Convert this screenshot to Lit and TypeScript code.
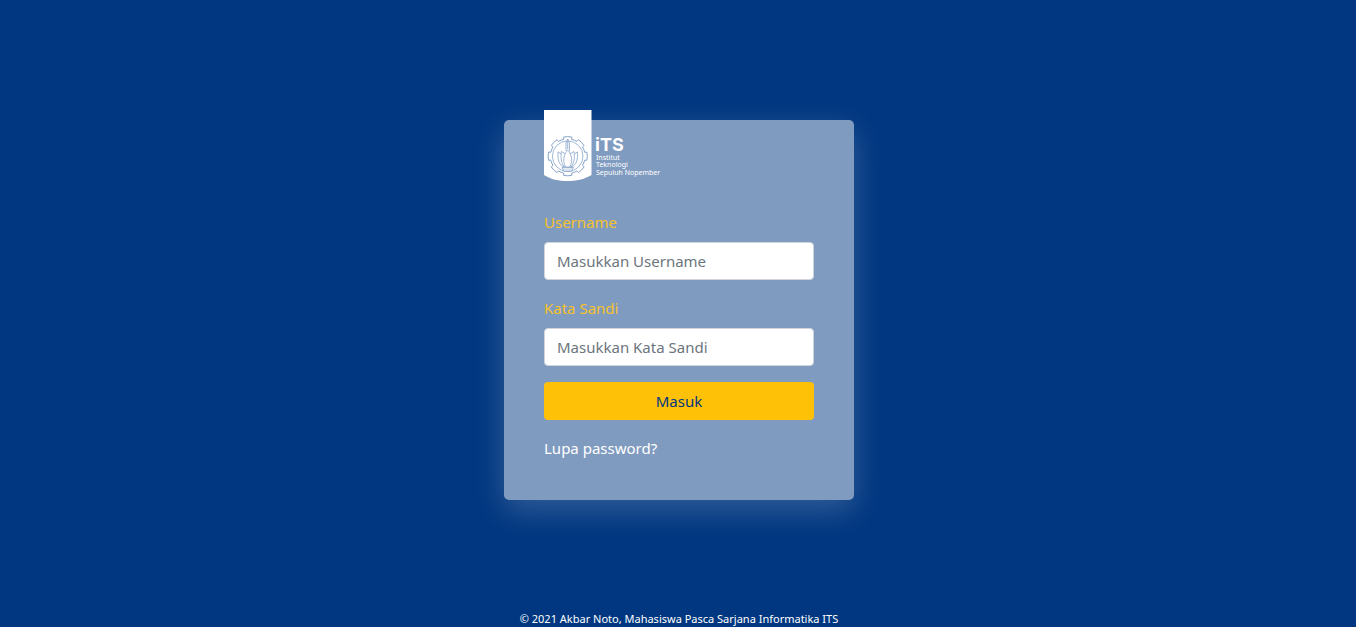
import { LitElement, html, css, svg } from "lit";
import { customElement } from "lit/decorators.js";

const gearTeeth = Array.from({ length: 8 }, (_, i) => i * 45);

// Outline of the cog: eight wide teeth joined by short inner arcs.
function gearPath(cx: number, cy: number, outer: number, inner: number): string {
  const at = (r: number, deg: number) => {
    const a = ((deg - 90) * Math.PI) / 180;
    return `${(cx + r * Math.cos(a)).toFixed(2)} ${(cy + r * Math.sin(a)).toFixed(2)}`;
  };
  return (
    gearTeeth
      .map(
        (d, i) =>
          `${i ? "L" : "M"}${at(outer, d - 12)}A${outer} ${outer} 0 0 1 ${at(outer, d + 12)}` +
          `L${at(inner, d + 13)}A${inner} ${inner} 0 0 1 ${at(inner, d + 32)}`
      )
      .join("") + "Z"
  );
}

@customElement("its-logo")
export class ItsLogo extends LitElement {
  static styles = css`
    :host { display: block; }
    .logo { display: block; width: 116px; height: 72px; overflow: visible; }
    .ribbon { fill: #fff; }
    .line { fill: none; stroke: #88a4ca; stroke-width: 1; stroke-linejoin: round; }
    .thin { stroke-width: 0.8; }
    .petal { fill: #fff; }
    .base { fill: #dfe7f2; stroke: #7f9dc6; stroke-width: 0.7; }
    .word { fill: #fff; font: 700 18px Inter, "Noto Sans", sans-serif; }
    .small { fill: #fff; font: 400 7px "Noto Sans", "Open Sans", sans-serif; }
  `;

  render() {
    return html`
      <svg class="logo" viewBox="0 0 116 72" role="img" aria-label="Institut Teknologi Sepuluh Nopember">
        <path class="ribbon" d="M0 0H47.500V65C40 69.500 32 71 23.700 71C15 71 7 69.500 0 65Z" />
        ${svg`<path class="line" d=${gearPath(23.7, 46.2, 19.6, 17.4)} />`}
        <circle class="line thin" cx="23.700" cy="46.200" r="15.300" />
        <path class="line thin" d="M23.700 29L22 33V41M23.700 29L25.400 33V41M23.700 31V39" />
        <path class="line thin petal" d="M20 57C15 55 13.500 50 14 42L18 44.500L20 57ZM27.400 57C32.400 55 33.900 50 33.400 42L29.400 44.500L27.400 57Z" />
        <path class="line thin petal" d="M20.500 57C17 53 16.500 47 17.500 41.500L21.500 44L23 57ZM26.900 57C30.400 53 30.900 47 29.900 41.500L25.900 44L24.400 57Z" />
        <path class="line thin petal" d="M23.700 40C19.500 44.500 18.500 51 21.500 57H25.900C28.900 51 27.900 44.500 23.700 40Z" />
        <path class="base" d="M18 57.500H29.400L27.700 61.300H19.700Z" />
        <text class="word" x="51" y="41">iTS</text>
        <text class="small" x="52" y="50">Institut</text>
        <text class="small" x="52" y="57">Teknologi</text>
        <text class="small" x="52" y="65">Sepuluh Nopember</text>
      </svg>
    `;
  }
}

@customElement("app-root")
export class AppRoot extends LitElement {
  static styles = css`
    :host {
      display: flex;
      flex-direction: column;
      min-height: 100vh;
      box-sizing: border-box;
      background: #003780;
      color: #fff;
      font: 400 15px/24px "Segoe UI", "Noto Sans", "Open Sans", sans-serif;
    }
    *, *::before, *::after { box-sizing: border-box; }
    main { flex: 1; display: flex; align-items: center; justify-content: center; padding: 10px 0 0 2px; }
    .card {
      width: 350px;
      max-width: 100%;
      padding: 0 40px;
      border-radius: 5px;
      background: rgba(255, 255, 255, 0.5);
      box-shadow: 0 10px 32px rgba(255, 255, 255, 0.2);
    }
    .brand { margin-top: -10px; margin-bottom: 28px; }
    form { display: flex; flex-direction: column; gap: 16px; padding-bottom: 40px; }
    .field { display: flex; flex-direction: column; gap: 8px; }
    label { color: #f6c22c; }
    input {
      width: 100%;
      height: 38px;
      padding: 6px 12px;
      border: 1px solid #ced4da;
      border-radius: 4px;
      background: #fff;
      color: #495057;
      font: inherit;
    }
    input::placeholder { color: #6c757d; opacity: 1; }
    button {
      height: 38px;
      border: 0;
      border-radius: 4px;
      background: #ffc107;
      color: #003780;
      font: inherit;
      cursor: pointer;
    }
    a { color: #fff; text-decoration: none; align-self: flex-start; }
    footer { padding-left: 2px; text-align: center; font-size: 11px; line-height: 17px; }
  `;

  render() {
    return html`
      <main>
        <section class="card">
          <its-logo class="brand"></its-logo>
          <form @submit=${(e: Event) => e.preventDefault()}>
            <div class="field">
              <label for="username">Username</label>
              <input id="username" type="text" placeholder="Masukkan Username" autocomplete="username" />
            </div>
            <div class="field">
              <label for="password">Kata Sandi</label>
              <input id="password" type="password" placeholder="Masukkan Kata Sandi" autocomplete="current-password" />
            </div>
            <button type="submit">Masuk</button>
            <a href="#">Lupa password?</a>
          </form>
        </section>
      </main>
      <footer>© 2021 Akbar Noto, Mahasiswa Pasca Sarjana Informatika ITS</footer>
    `;
  }
}
